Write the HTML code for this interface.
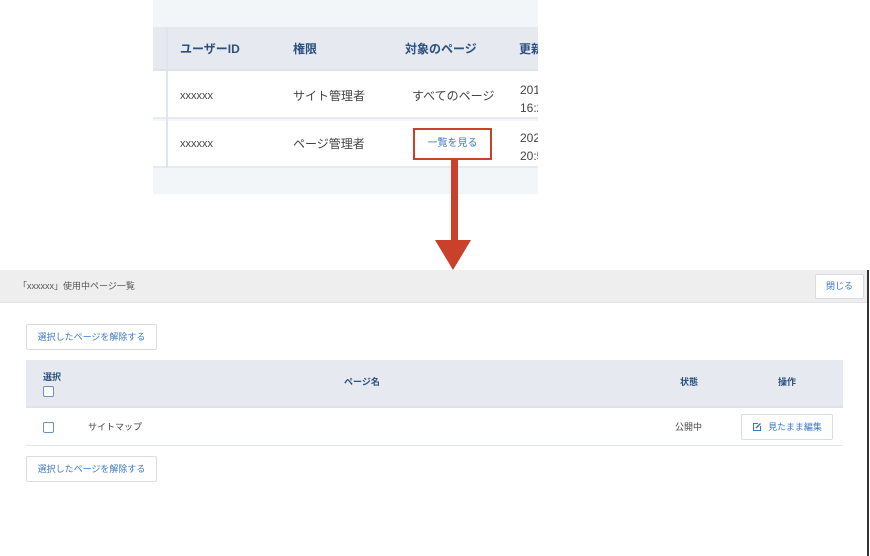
<!DOCTYPE html>
<html><head><meta charset="utf-8"><style>
*{margin:0;padding:0;box-sizing:border-box}
body{width:870px;height:556px;background:#fff;position:relative;overflow:hidden;font-family:"Liberation Sans","Noto Sans CJK JP",sans-serif;}
.a{position:absolute;white-space:nowrap;line-height:1}
.top{position:absolute;left:153px;top:0;width:385px;height:194px;background:#f3f6f9;overflow:hidden}
.th{color:#2b4f7e;font-weight:bold;font-size:12px}
.td{color:#444;font-size:12px}
.btn{position:absolute;background:#fff;border:1px solid #d9dde3;border-radius:2px;color:#3b78c4;font-size:9px;display:flex;align-items:center;justify-content:center;line-height:1}
.cb{position:absolute;width:11px;height:11px;border:1.3px solid #6b8fc8;border-radius:2px;background:#fff}
</style></head><body>
<div class="top">
 <div class="a" style="left:0;top:27px;width:385px;height:44px;background:#e6eaf0;border-bottom:2px solid #dde3ea"></div>
 <div class="a" style="left:0;top:71px;width:385px;height:48px;background:#fff;border-bottom:2px solid #e6ebf1"></div>
 <div class="a" style="left:0;top:121px;width:385px;height:47px;background:#fff;border-bottom:2px solid #e6ebf1"></div>
 <div class="a" style="left:13px;top:27px;width:2px;height:141px;background:#dfe5ec"></div>
 <div class="a th" style="left:27px;top:43px">ユーザーID</div>
 <div class="a th" style="left:140px;top:43px">権限</div>
 <div class="a th" style="left:252px;top:43px">対象のページ</div>
 <div class="a th" style="left:366px;top:43px">更新</div>
 <div class="a td" style="left:27px;top:91px;font-size:11px">xxxxxx</div>
 <div class="a td" style="left:140px;top:90px">サイト管理者</div>
 <div class="a td" style="left:259px;top:90px">すべてのページ</div>
 <div class="a td" style="left:367px;top:81px;line-height:18px">2019<br>16:20</div>
 <div class="a td" style="left:27px;top:139px;font-size:11px">xxxxxx</div>
 <div class="a td" style="left:140px;top:138px">ページ管理者</div>
 <div class="a" style="left:260px;top:128px;width:79px;height:32px;border:2px solid #c9402b;color:#3b78c4;font-size:10px;display:flex;align-items:center;justify-content:center">一覧を見る</div>
 <div class="a td" style="left:367px;top:129px;line-height:18px">2020<br>20:50</div>
</div>
<div class="a" style="left:451px;top:160px;width:7px;height:82px;background:#c9402b"></div>
<svg class="a" style="left:435px;top:240px" width="36" height="30"><polygon points="0,0 36,0 18,30" fill="#c9402b"/></svg>

<div class="a" style="left:0;top:270px;width:867px;height:33px;background:#eeeeee;border-bottom:1px solid #e2e2e2"></div>
<div class="a" style="left:867px;top:270px;width:2px;height:286px;background:#333"></div>
<div class="a" style="left:18px;top:282px;font-size:9px;color:#555">「xxxxxx」使用中ページ一覧</div>
<div class="btn" style="left:815px;top:274px;width:49px;height:25px">閉じる</div>

<div class="btn" style="left:26px;top:324px;width:131px;height:26px">選択したページを解除する</div>
<div class="a" style="left:26px;top:360px;width:817px;height:48px;background:#e6eaf0;border-bottom:2px solid #dde3ea"></div>
<div class="a" style="left:26px;top:408px;width:817px;height:38px;border-bottom:1px solid #e3e8ee"></div>
<div class="a th" style="left:43px;top:373px;font-size:9px">選択</div>
<div class="cb" style="left:43px;top:386px"></div>
<div class="a th" style="left:344px;top:378px;font-size:9px">ページ名</div>
<div class="a th" style="left:680px;top:378px;font-size:9px">状態</div>
<div class="a th" style="left:778px;top:378px;font-size:9px">操作</div>
<div class="cb" style="left:43px;top:422px"></div>
<div class="a" style="left:88px;top:423px;font-size:9px;color:#444">サイトマップ</div>
<div class="a" style="left:675px;top:423px;font-size:9px;color:#444">公開中</div>
<div class="btn" style="left:741px;top:414px;width:92px;height:26px">
<svg width="10" height="10" viewBox="0 0 10 10" style="margin-right:6px"><path d="M6 1.5H1.5v7h7V4" fill="none" stroke="#3b78c4" stroke-width="1.1"/><path d="M4 6l4.5-4.5" stroke="#3b78c4" stroke-width="1.4"/></svg>見たまま編集</div>
<div class="btn" style="left:26px;top:456px;width:131px;height:26px">選択したページを解除する</div>
</body></html>
